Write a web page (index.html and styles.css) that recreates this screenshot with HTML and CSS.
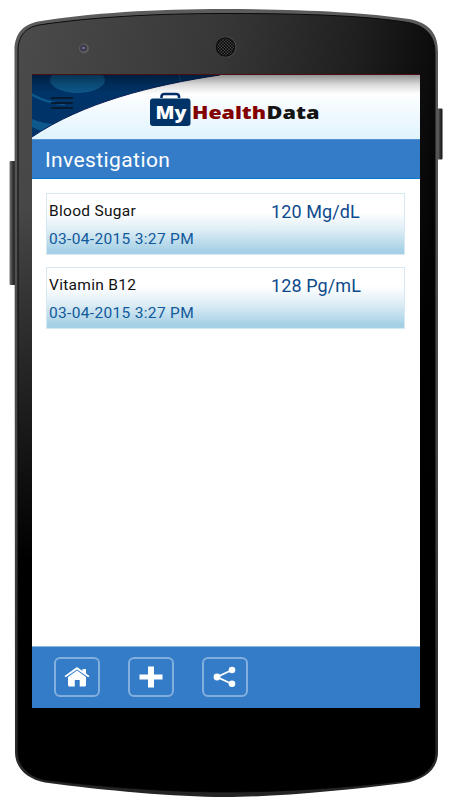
FILE: index.html
```html
<!DOCTYPE html>
<html lang="en">
<head>
    <meta charset="UTF-8">
    <meta name="viewport" content="width=device-width, initial-scale=1.0">
    <title>MyHealthData - Investigation</title>
    <link rel="stylesheet" href="styles.css">
</head>
<body>
    <div class="phone">
        <!-- Phone body -->
        <svg class="phone-body" width="450" height="800" viewBox="0 0 450 800">
            <defs>
                <linearGradient id="bodyFill" x1="0" y1="0" x2="1" y2="0.32">
                    <stop offset="0" stop-color="#4c4b4b"/>
                    <stop offset="0.45" stop-color="#383737"/>
                    <stop offset="0.75" stop-color="#1f1f1f"/>
                    <stop offset="1" stop-color="#020202"/>
                </linearGradient>
                <linearGradient id="bodyShade" x1="0" y1="0" x2="0" y2="1">
                    <stop offset="0.25" stop-color="#000" stop-opacity="0"/>
                    <stop offset="0.7" stop-color="#000"/>
                </linearGradient>
                <linearGradient id="rim" x1="0" y1="0" x2="0" y2="1">
                    <stop offset="0" stop-color="#5c5c5c"/>
                    <stop offset="0.6" stop-color="#444"/>
                    <stop offset="1" stop-color="#242424"/>
                </linearGradient>
                <linearGradient id="key" x1="0" y1="0" x2="1" y2="0">
                    <stop offset="0" stop-color="#777"/>
                    <stop offset="0.5" stop-color="#3a3a3a"/>
                    <stop offset="1" stop-color="#111"/>
                </linearGradient>
                <pattern id="mesh" width="3" height="3" patternUnits="userSpaceOnUse">
                    <circle cx="1" cy="1" r="0.7" fill="#666"/>
                    <circle cx="2.5" cy="2.5" r="0.6" fill="#555"/>
                </pattern>
            </defs>
            <rect x="9.5" y="161" width="6" height="124" rx="1" fill="url(#key)"/>
            <rect x="437" y="108.500" width="5.500" height="51" rx="1" fill="url(#key)"/>
            <path fill="url(#rim)" d="M14.500 50C14.500 36 21 25 38 21.500C90 13 155 9 225 9C295 9 362 12 409 19C430 23 438 34 438 52V752C438 769 425 780 404 783C345 790.500 275 797 225 797C175 797 105 790.500 45 782.500C27 779 15 768 15 752Z"/>
            <path fill="url(#bodyFill)" stroke="#0b0b0b" d="M18 51C18 37 24 28 39 25C92 17 156 13.500 225 13.500C295 13.500 361 15 408 22.500C427 26 435 37 435 53V752C435 767 424 778 403 781C340 788.500 275 792 225 792C175 792 105 787.500 46 780C29 777 18 766 18 752Z"/>
            <path fill="url(#bodyShade)" d="M18 51C18 37 24 28 39 25C92 17 156 13.500 225 13.500C295 13.500 361 15 408 22.500C427 26 435 37 435 53V752C435 767 424 778 403 781C340 788.500 275 792 225 792C175 792 105 787.500 46 780C29 777 18 766 18 752Z"/>
            <circle cx="84" cy="48.500" r="5" fill="#5c5b5d"/>
            <circle cx="83.500" cy="48" r="3.300" fill="#3a3945"/>
            <circle cx="83.500" cy="48" r="1.300" fill="#7772b0"/>
            <circle cx="226" cy="47" r="10.500" fill="#484848"/>
            <circle cx="225.500" cy="47" r="9.800" fill="#0d0d0d"/>
            <circle cx="225.500" cy="47" r="8.500" fill="url(#mesh)"/>
        </svg>

        <div class="screen">
            <header class="app-header">
                <svg width="388" height="64" viewBox="0 0 388 64">
                    <defs>
                        <linearGradient id="topShadow" x1="0" y1="0" x2="0" y2="1">
                            <stop offset="0" stop-color="#000" stop-opacity="0.42"/>
                            <stop offset="0.5" stop-color="#000" stop-opacity="0.15"/>
                            <stop offset="1" stop-color="#000" stop-opacity="0"/>
                        </linearGradient>
                        <clipPath id="swoosh">
                            <path d="M0 0H188C120 10 50 28 0 62Z"/>
                        </clipPath>
                    </defs>
                    <g clip-path="url(#swoosh)">
                        <rect width="188" height="64" fill="#003468"/>
                        <ellipse cx="45.500" cy="5" rx="27.500" ry="13" fill="#0d588c"/>
                        <path d="M-1 19Q14 28 33 29" fill="none" stroke="#0d588c" stroke-width="2.500"/>
                        <path d="M0 44Q12 49 24 49L12 57Q4 54 0 52Z" fill="#0d588c"/>
                        <path d="M147 0Q149 4 148 9" fill="none" stroke="#0d588c"/>
                    </g>
                    <path d="M188 0C120 10 50 28 0 62" fill="none" stroke="#0a2058"/>
                    <rect width="388" height="19" fill="url(#topShadow)"/>
                    <!-- Menu icon -->
                    <path d="M19 23H41M19 28H41M19 33H41" stroke="#061c33" stroke-width="2"/>
                    <!-- Logo -->
                    <path d="M129.500 23V21.500Q129.500 19 132.500 19H144Q147 19 147 21.500V23" fill="none" stroke="#002d69" stroke-width="2.600"/>
                    <rect x="118" y="23.500" width="40.500" height="27.500" rx="3" fill="#003468"/>
                    <text class="logo-text" x="123.500" y="44" fill="#fff" textLength="31" lengthAdjust="spacingAndGlyphs">My</text>
                    <text class="logo-text" x="160" y="44" fill="#820000" textLength="74" lengthAdjust="spacingAndGlyphs">Health</text>
                    <text class="logo-text" x="234.500" y="44" fill="#151515" textLength="53" lengthAdjust="spacingAndGlyphs">Data</text>
                </svg>
            </header>

            <h1 class="title">Investigation</h1>

            <main class="results">
                <div class="card">
                    <div class="info">
                        <p class="name">Blood Sugar</p>
                        <p class="date">03-04-2015 3:27 PM</p>
                    </div>
                    <p class="value">120 Mg/dL</p>
                </div>
                <div class="card">
                    <div class="info">
                        <p class="name">Vitamin B12</p>
                        <p class="date">03-04-2015 3:27 PM</p>
                    </div>
                    <p class="value">128 Pg/mL</p>
                </div>
            </main>

            <footer class="toolbar">
                <button class="tool" aria-label="Home">
                    <svg width="26" height="22" viewBox="0 0 26 22" fill="#fff">
                        <path d="M13 1L0.500 10L1.700 11.300L13 3.400L24.300 11.300L25.500 10L22 7.400V3H18.500V5Z"/>
                        <path d="M13 4.500L22 11V19Q22 20.500 20.500 20.500H15.700V14H10.800V20.500H5.500Q4 20.500 4 19V11Z"/>
                    </svg>
                </button>
                <button class="tool" aria-label="Add">
                    <svg width="24" height="22" viewBox="0 0 24 22" fill="#fff">
                        <path d="M9 0.500H15V8.500H23.500V13.500H15V21.500H9V13.500H0.500V8.500H9Z"/>
                    </svg>
                </button>
                <button class="tool" aria-label="Share">
                    <svg width="24" height="22" viewBox="0 0 24 22" fill="#fff">
                        <path d="M19 4L4 11L19 18" fill="none" stroke="#fff" stroke-width="1.800"/>
                        <circle cx="4" cy="11" r="3.400"/>
                        <circle cx="19" cy="4" r="3.300"/>
                        <circle cx="19" cy="17.800" r="3.300"/>
                    </svg>
                </button>
            </footer>
        </div>
    </div>
</body>
</html>
```
FILE: styles.css
```css
/* Global styles */
body {
    font-family: Roboto, Arial, sans-serif;
    margin: 0;
    background-color: #fff;
    overflow: hidden;
}

h1,
p {
    margin: 0;
    font-weight: 400;
}

/* Phone */
.phone {
    position: relative;
    width: 450px;
    height: 800px;
    padding: 75px 30px 92px 32px;
    box-sizing: border-box;
}

.phone-body {
    position: absolute;
    left: 0;
    top: 0;
    z-index: -1;
}

.screen {
    display: flex;
    flex-direction: column;
    height: 632.5px;
    background-color: #fff;
    box-shadow: 0 -1px 0 #4a1014;
}

/* Header styles */
.app-header {
    height: 64px;
    background: linear-gradient(#fff 25%, #e0f3fd);
}

.app-header svg {
    display: block;
}

.logo-text {
    font-family: "Open Sans", sans-serif;
    font-weight: 800;
    font-size: 18px;
}

.title {
    height: 40px;
    padding-left: 13px;
    box-sizing: border-box;
    border-top: 1px solid #5292d0;
    border-bottom: 1px solid #0078cd;
    background-color: #347cc8;
    color: #fff;
    font-size: 21px;
    line-height: 40px;
    letter-spacing: 0.4px;
}

/* Result cards */
.results {
    display: flex;
    flex: 1;
    flex-direction: column;
    gap: 12px;
    padding: 14px 15px 0 14px;
}

.card {
    display: flex;
    height: 62px;
    padding: 0 2px;
    box-sizing: border-box;
    border: 1px solid #d4e9f2;
    background: linear-gradient(#fff 30%, #deedf5 60%, #a5d0e5 95%);
}

.info {
    width: 222px;
}

.name {
    padding-top: 6px;
    color: #111;
    font-size: 15.5px;
    line-height: 22px;
    letter-spacing: 0.3px;
}

.date {
    padding-top: 6px;
    color: #10599b;
    font-size: 15.5px;
    line-height: 22px;
    letter-spacing: 0.33px;
}

.value {
    padding-top: 7px;
    color: #0d4a8c;
    font-size: 18px;
    line-height: 22px;
    letter-spacing: 0.1px;
}

/* Bottom toolbar */
.toolbar {
    display: flex;
    gap: 28px;
    height: 62px;
    padding: 10px 0 0 22px;
    box-sizing: border-box;
    border-top: 1px solid #8fb8df;
    background-color: #347cc8;
}

.tool {
    display: flex;
    align-items: center;
    justify-content: center;
    width: 46px;
    height: 40px;
    padding: 0;
    border: 2px solid #82afdd;
    border-radius: 6px;
    background: none;
}
```
